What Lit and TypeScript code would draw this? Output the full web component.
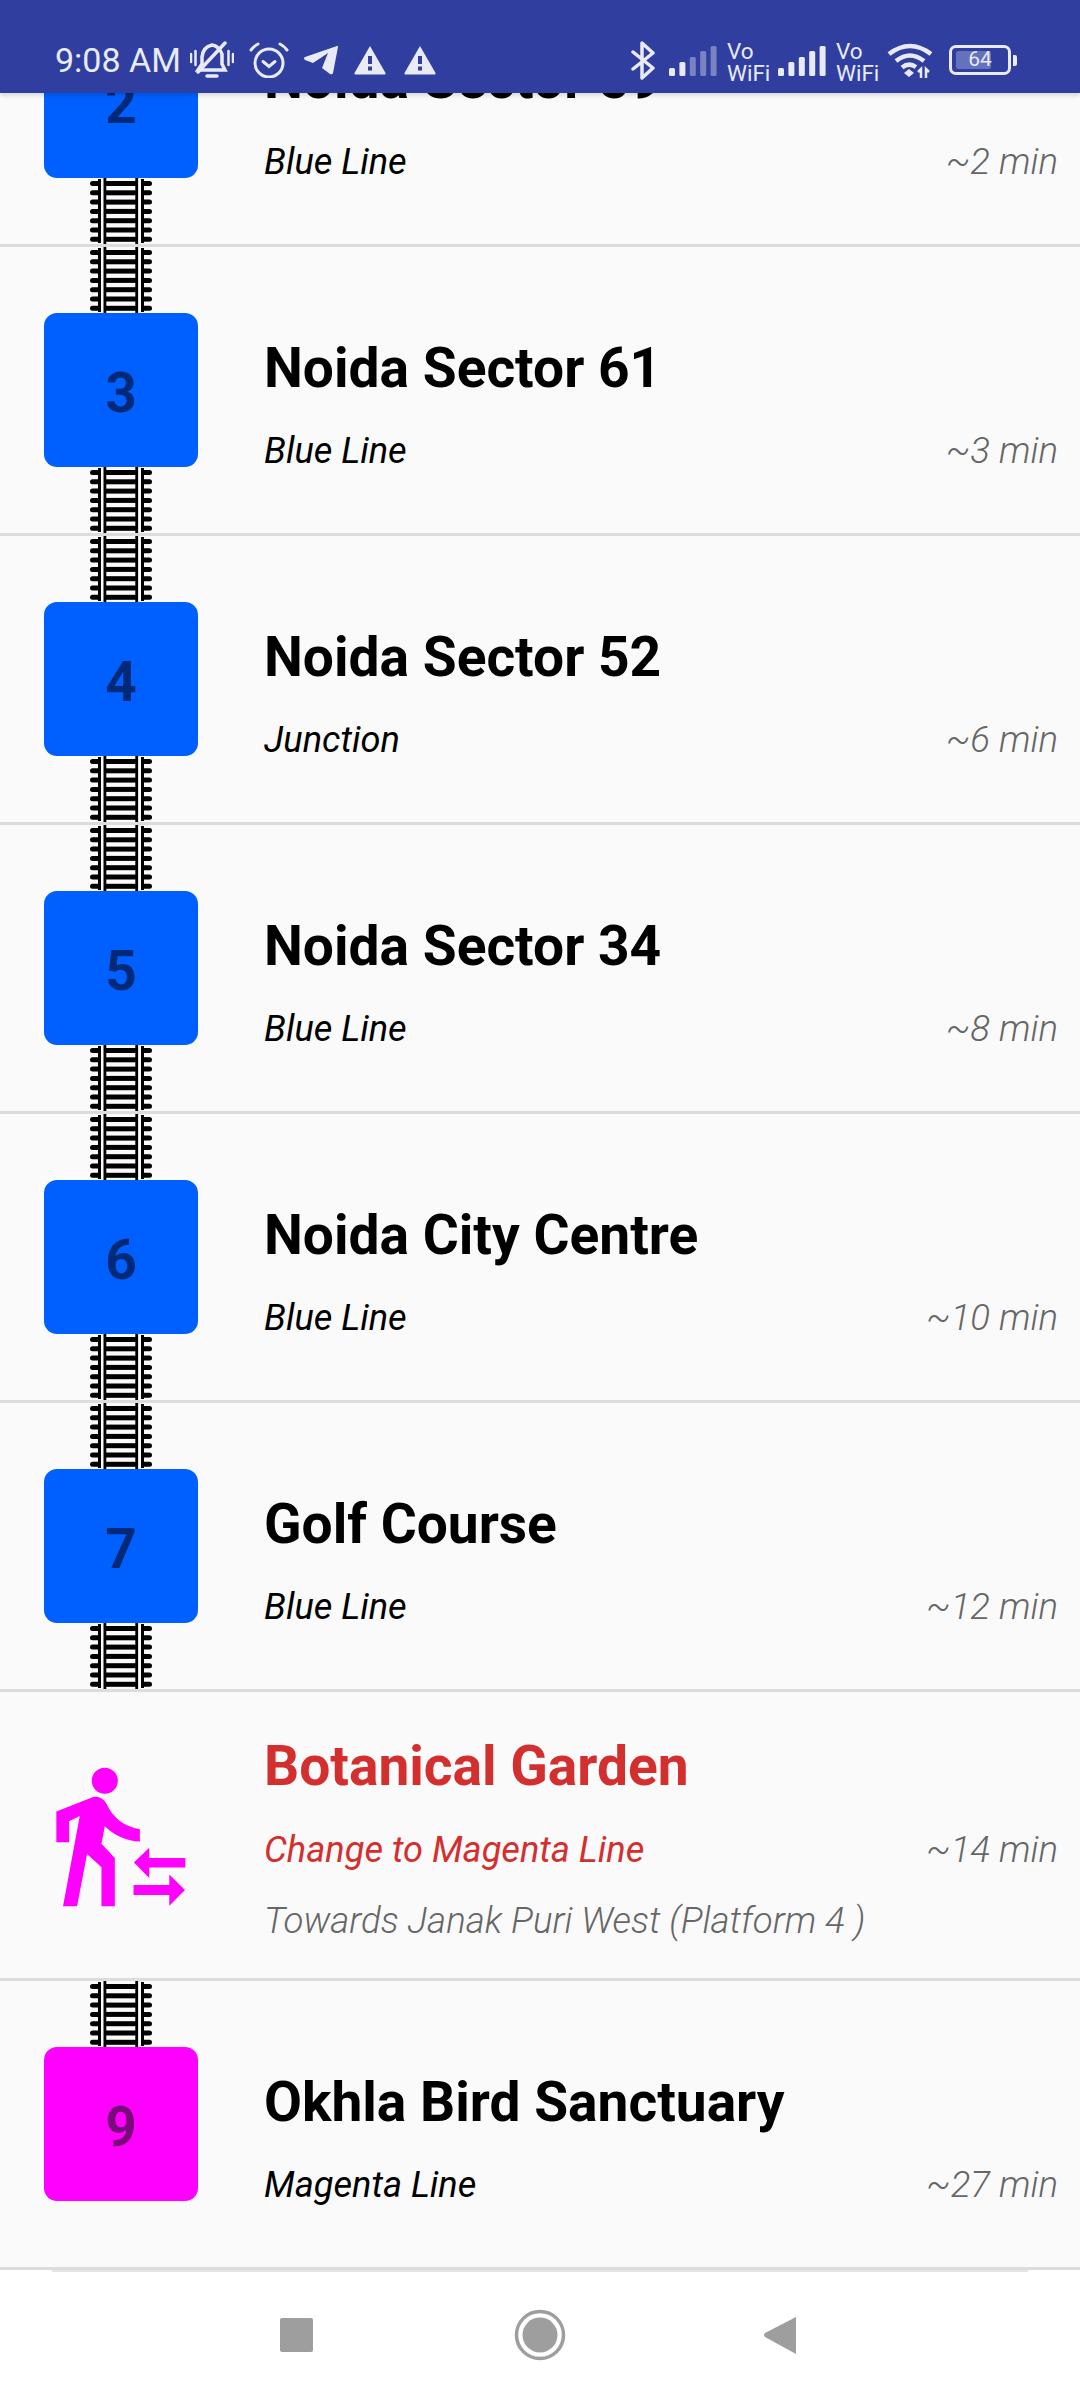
import { LitElement, html, css, svg } from 'lit';
import { customElement } from 'lit/decorators.js';

type Stop = {
  no?: string;
  name: string;
  line: string;
  time: string;
  color?: string;
  top?: boolean;
  bottom?: boolean;
};

const stops: Stop[] = [
  { no: '2', name: 'Noida Sector 59', line: 'Blue Line', time: '~2 min', color: 'blue', top: true, bottom: true },
  { no: '3', name: 'Noida Sector 61', line: 'Blue Line', time: '~3 min', color: 'blue', top: true, bottom: true },
  { no: '4', name: 'Noida Sector 52', line: 'Junction', time: '~6 min', color: 'blue', top: true, bottom: true },
  { no: '5', name: 'Noida Sector 34', line: 'Blue Line', time: '~8 min', color: 'blue', top: true, bottom: true },
  { no: '6', name: 'Noida City Centre', line: 'Blue Line', time: '~10 min', color: 'blue', top: true, bottom: true },
  { no: '7', name: 'Golf Course', line: 'Blue Line', time: '~12 min', color: 'blue', top: true, bottom: true },
];

const tieRows = [0, 1, 2, 3, 4, 5, 6];

// one piece of track between a badge and the row edge
const track = () => html`
  <svg class="track" width="62" height="66" viewBox="0 0 62 66">
    ${tieRows.map(i => svg`
      <rect x="0" y=${3 + i * 9.3} width="11" height="5" rx="2.5" fill="#000"/>
      <rect x="51" y=${3 + i * 9.3} width="11" height="5" rx="2.5" fill="#000"/>
      <rect x="15" y=${3 + i * 9.3} width="32" height="5" fill="#000"/>
    `)}
    <rect x="8" y="1" width="3" height="64" fill="#000"/>
    <rect x="51" y="1" width="3" height="64" fill="#000"/>
    <rect x="13.500" y="0" width="2.800" height="66" fill="#000"/>
    <rect x="45.300" y="0" width="2.800" height="66" fill="#000"/>
  </svg>
`;

const interchange = html`
  <svg class="walk" width="137" height="147" viewBox="160 305 410 440">
    <circle cx="315" cy="361" r="39" fill="#f0f"/>
    <path fill="#f0f" d="M170 453 L280 410 Q305 405 320 430 Q350 495 420 506 L420 543 Q360 540 315 497 L305 550 L345 592 L345 737 L305 737 L305 620 L262 580 L232 737 L190 737 L240 467 L208 482 L208 545 L170 545 Z"/>
    <path fill="#f0f" d="M402 606 L448 562 L448 592 L556 592 L556 621 L448 621 L448 652 Z"/>
    <path fill="#f0f" d="M555 688 L508 642 L508 673 L401 673 L401 703 L508 703 L508 735 Z"/>
  </svg>
`;

const warning = html`
  <svg width="32" height="30" viewBox="0 0 32 30">
    <path fill="#e8eaf6" d="M16 1 L31.500 28 Q32 29.500 30.500 29.500 L1.500 29.500 Q0 29.500 .5 28 Z"/>
    <rect x="14" y="11" width="4" height="8" fill="#303f9f"/>
    <rect x="14" y="21.500" width="4" height="4" fill="#303f9f"/>
  </svg>
`;

const bars = [8, 14, 19, 25, 30];

const signal = (dim: boolean) => html`
  <svg width="48" height="31" viewBox="0 0 48 31">
    ${bars.map((h, i) => svg`
      <rect x=${i * 10.4} y=${31 - h} width="6" height=${h} rx="1.500" fill="#e8eaf6"
        opacity=${dim && i > 1 ? 0.4 : 1}/>
    `)}
  </svg>
`;

const voWifi = html`<span class="vo"><span>Vo</span><span>WiFi</span></span>`;

@customElement('app-root')
export class AppRoot extends LitElement {
  static styles = css`
    :host {
      display: block;
      width: 1080px;
      height: 2400px;
      overflow: hidden;
      background: #fff;
      font-family: Roboto, sans-serif;
    }
    .status {
      position: relative;
      z-index: 2;
      height: 93px;
      box-sizing: border-box;
      padding: 27px 63px 0 56px;
      background: #303f9f;
      color: #e8eaf6;
      display: flex;
      justify-content: space-between;
      align-items: center;
      box-shadow: 0 2px 5px rgba(0, 0, 0, 0.16);
    }
    .status svg { display: block; flex: none; }
    .left, .right { display: flex; align-items: center; }
    .clock { font-size: 34px; font-weight: 400; line-height: 40px; width: 125px; white-space: nowrap; margin-left: -1px; margin-right: 1px; }
    .bell { margin-left: 9px; }
    .alarm { margin-left: 15px; }
    .plane { margin-left: 15px; }
    .warn-a { margin-left: 16px; }
    .warn-b { margin-left: 18px; }
    .right { gap: 10px; }
    .sig { margin-left: 4px; }
    .vo {
      display: flex;
      flex-direction: column;
      width: 41px;
      margin-top: 3px;
      font-size: 22.5px;
      line-height: 22px;
      font-weight: 400;
    }
    .batt-wrap { margin-left: 6px; display: flex; align-items: center; gap: 2px; }
    .batt {
      width: 62px;
      height: 30px;
      box-sizing: border-box;
      border: 3.5px solid #e8eaf6;
      border-radius: 7px;
      padding: 3px 4px;
      display: flex;
      position: relative;
    }
    .batt-fill { width: 35px; background: #6471bd; border-radius: 2px; }
    .batt-num {
      position: absolute;
      inset: 0;
      text-align: center;
      font-size: 21px;
      line-height: 23px;
      font-weight: 400;
    }
    .nub { width: 4px; height: 11px; background: #e8eaf6; border-radius: 0 2px 2px 0; }
    .list {
      height: 2177px;
      overflow: hidden;
      background: #fafafa;
    }
    .rows { margin-top: -135px; }
    .row {
      height: 286px;
      border-bottom: 3px solid #dcdcdc;
      display: grid;
      grid-template-columns: 264px 1fr;
      background: #fafafa;
    }
    .rail {
      width: 242px;
      height: 286px;
      display: flex;
      flex-direction: column;
      align-items: center;
      justify-content: center;
    }
    .track { display: block; flex: none; }
    .gap { height: 66px; flex: none; }
    .badge {
      width: 154px;
      height: 154px;
      box-sizing: border-box;
      padding-top: 5px;
      flex: none;
      border-radius: 13px;
      display: flex;
      align-items: center;
      justify-content: center;
      font-size: 55px;
      font-weight: 700;
    }
    .blue { background: #0060ff; color: #002a78; }
    .magenta { background: #ff00ff; color: #7a0a7a; }
    .info {
      padding: 89px 22px 0 0;
      display: flex;
      flex-direction: column;
    }
    .info.change { padding-top: 42px; }
    .name {
      font-size: 55.1px;
      line-height: 64px;
      font-weight: 700;
      color: #000;
      white-space: nowrap;
    }
    .sub {
      margin-top: 30px;
      display: flex;
      justify-content: space-between;
      align-items: center;
      line-height: 42px;
      font-size: 36.67px;
      font-style: italic;
      font-weight: 300;
    }
    .change .sub { margin-top: 31px; }
    .line { color: #000; font-size: 36.2px; font-weight: 400; }
    .time { color: #666; }
    .change .name, .change .line { color: #d32f2f; }
    .towards {
      margin-top: 29px;
      font-size: 36.67px;
      line-height: 42px;
      font-style: italic;
      font-weight: 300;
      color: #666;
      white-space: nowrap;
    }
    .edge { height: 2px; margin: 0 52px; background: #e4e4e4; }
    .nav {
      height: 128px;
      background: #fff;
      position: relative;
    }
    .nav svg { display: block; }
  `;

  private renderRow(s: Stop) {
    return html`
      <div class="row">
        <div class="rail">
          ${s.top ? track() : html`<div class="gap"></div>`}
          <div class="badge ${s.color}">${s.no}</div>
          ${s.bottom ? track() : html`<div class="gap"></div>`}
        </div>
        <div class="info">
          <div class="name">${s.name}</div>
          <div class="sub"><span class="line">${s.line}</span><span class="time">${s.time}</span></div>
        </div>
      </div>
    `;
  }

  render() {
    return html`
      <div class="status">
        <div class="left">
          <span class="clock">9:08 AM</span>
          <svg class="bell" width="44" height="38" viewBox="0 0 44 38" fill="none" stroke="#e8eaf6" stroke-width="3.500" stroke-linecap="round">
            <path d="M1 13 V21 M5.500 10 V24 M38.500 10 V24 M43 13 V21" stroke-width="2.500"/>
            <path d="M8 29 L35 29 L32 23 V13 Q29 5 22 4 Q13 6 12 16 V23 Z"/>
            <path d="M8 31 L35 2"/>
            <path d="M17 35 H27" stroke-width="3.500"/>
          </svg>
          <svg class="alarm" width="40" height="36" viewBox="0 0 40 36" fill="none" stroke="#e8eaf6" stroke-width="3" stroke-linecap="round">
            <circle cx="20" cy="21" r="14"/>
            <path d="M14 19.500 L20 24.500 L26 19.500"/>
            <path d="M2 8 Q5 4 9 2 M38 8 Q35 4 31 2"/>
          </svg>
          <svg class="plane" width="34" height="30" viewBox="0 0 34 30">
            <path fill="#e8eaf6" d="M33 1 Q34 0 34 2 L29 28 Q28.500 30 26 29 L18 23 L24 8 L9 18 L1 15 Q-1 13 1 12 Z"/>
          </svg>
          <span class="warn-a">${warning}</span>
          <span class="warn-b">${warning}</span>
        </div>
        <div class="right">
          <svg width="24" height="39" viewBox="0 0 24 39" fill="none" stroke="#e8eaf6" stroke-width="3.500" stroke-linecap="round" stroke-linejoin="round">
            <path d="M2 11 L22 27 L11 37 V2 L22 12 L2 28"/>
          </svg>
          <span class="sig">${signal(true)}</span>
          ${voWifi}
          ${signal(false)}
          ${voWifi}
          <svg width="46" height="35" viewBox="0 0 46 35" fill="none" stroke="#e8eaf6" stroke-width="4.500">
            <path d="M2 11 Q23 -5 44 11"/>
            <path d="M9 18 Q23 7 37 18"/>
            <path d="M15 24.500 Q22 19 29 24"/>
            <path d="M17 30 L22 26 L27 30 L22 34 Z" fill="#e8eaf6" stroke="none"/>
            <path d="M31 29 L34 26 V35 M39 35 V26 L42 29" stroke-width="2.500"/>
          </svg>
          <div class="batt-wrap">
            <div class="batt">
              <div class="batt-fill"></div>
              <div class="batt-num">64</div>
            </div>
            <div class="nub"></div>
          </div>
        </div>
      </div>
      <div class="list">
        <div class="rows">
          ${stops.map(s => this.renderRow(s))}
          <div class="row">
            <div class="rail">${interchange}</div>
            <div class="info change">
              <div class="name">Botanical Garden</div>
              <div class="sub"><span class="line">Change to Magenta Line</span><span class="time">~14 min</span></div>
              <div class="towards">Towards Janak Puri West (Platform 4 )</div>
            </div>
          </div>
          ${this.renderRow({ no: '9', name: 'Okhla Bird Sanctuary', line: 'Magenta Line', time: '~27 min', color: 'magenta', top: true })}
        </div>
      </div>
      <div class="edge"></div>
      <div class="nav">
        <svg width="1080" height="128" viewBox="0 2272 1080 128">
          <rect x="280" y="2318" width="33" height="34" rx="2" fill="#9e9e9e"/>
          <circle cx="540" cy="2335" r="23.500" fill="none" stroke="#9e9e9e" stroke-width="3.500"/>
          <circle cx="540" cy="2335" r="17.500" fill="#9e9e9e"/>
          <path d="M796 2317 V2354 L765 2337 Q763 2335 765 2333 Z" fill="#9e9e9e"/>
        </svg>
      </div>
    `;
  }
}
